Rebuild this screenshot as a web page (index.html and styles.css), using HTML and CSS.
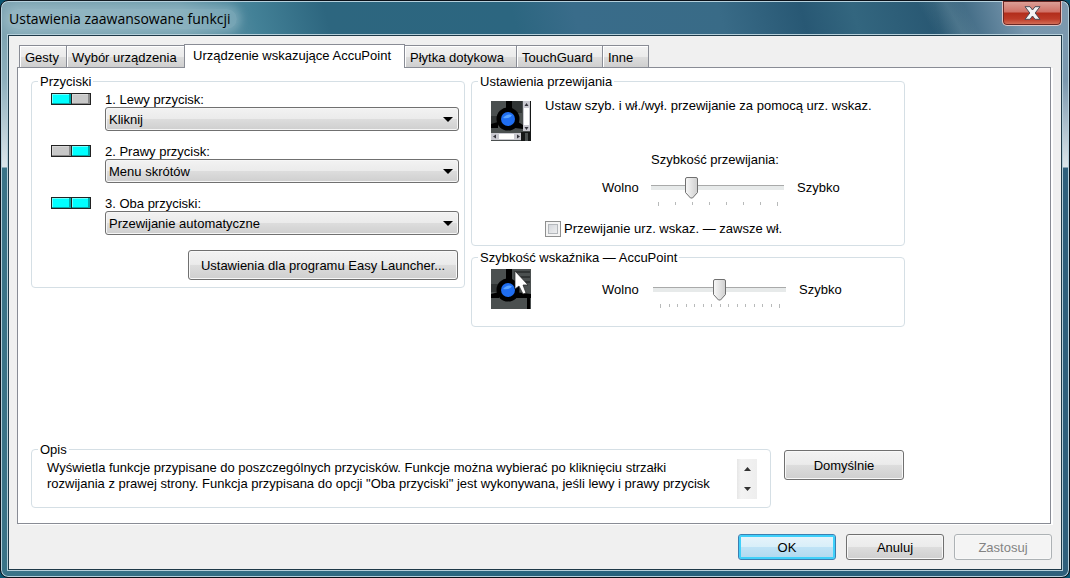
FILE: index.html
```html
<!DOCTYPE html>
<html lang="pl">
<head>
<meta charset="utf-8">
<title>Ustawienia zaawansowane funkcji</title>
<link rel="stylesheet" href="styles.css">
</head>
<body>
<main class="window">
  <header class="titlebar">
    <h1 class="title">Ustawienia zaawansowane funkcji</h1>
    <button class="close" type="button" aria-label="Zamknij">
      <svg width="17" height="14" viewBox="0 0 17 14"><path d="M1 .7h5L8.500 4 11 .7h5L11.200 7l4.800 6.300h-5L8.500 10 6 13.300H1L5.800 7z" fill="#f4f4f4" stroke="#4b4a55" stroke-width="1"/></svg>
    </button>
  </header>

  <form class="client">
    <div class="tabs" role="tablist">
      <button class="tab" type="button" role="tab">Gesty</button>
      <button class="tab" type="button" role="tab">Wybór urządzenia</button>
      <button class="tab tab-active" type="button" role="tab" aria-selected="true">Urządzenie wskazujące AccuPoint</button>
      <button class="tab" type="button" role="tab">Płytka dotykowa</button>
      <button class="tab" type="button" role="tab">TouchGuard</button>
      <button class="tab" type="button" role="tab">Inne</button>
    </div>

    <section class="panel" role="tabpanel">
      <div class="columns">
        <fieldset class="group">
          <legend>Przyciski</legend>
          <div class="assignments">
            <div class="assignment">
              <span class="pair"><i class="key key-on"></i><i class="key"></i></span>
              <div class="field">
                <label for="left">1. Lewy przycisk:</label>
                <select id="left"><option>Kliknij</option></select>
              </div>
            </div>
            <div class="assignment">
              <span class="pair"><i class="key"></i><i class="key key-on"></i></span>
              <div class="field">
                <label for="right">2. Prawy przycisk:</label>
                <select id="right"><option>Menu skrótów</option></select>
              </div>
            </div>
            <div class="assignment">
              <span class="pair"><i class="key key-on"></i><i class="key key-on"></i></span>
              <div class="field">
                <label for="both">3. Oba przyciski:</label>
                <select id="both"><option>Przewijanie automatyczne</option></select>
              </div>
            </div>
            <button class="button launcher" type="button">Ustawienia dla programu Easy Launcher...</button>
          </div>
        </fieldset>

        <div class="stack">
          <fieldset class="group">
            <legend>Ustawienia przewijania</legend>
            <div class="setting">
              <svg class="picture" width="40" height="40" viewBox="0 0 40 40">
                <rect width="40" height="40" fill="#4b5050"/>
                <path d="M0 15h13v8H0zM21 0h10v12H21z" fill="#303434"/>
                <path d="M15 0h6v8h-6zM0 23l7-2v6H0zM24 19l8 5v4l-8-1z" fill="#000"/>
                <circle cx="17" cy="18" r="11.500" fill="#000"/>
                <circle cx="17" cy="18" r="7" fill="#1f6df0"/>
                <path d="M12 17q4-5 9-3-2 4-9 3z" fill="#5ba4ff"/>
                <path d="M30 31h10v9H30zM39 0h1v40h-1z" fill="#151717"/>
                <path d="M34 32h3v8h-3z" fill="#4b5050"/>
                <path d="M32 0h7v30h-7zM0 32h30v7H0z" fill="#c9c9d0"/>
                <path d="M33 7h5v17h-5zM8 33h15v5H8z" fill="#fff"/>
                <path d="M33.500 5L35.500 2l2 3zM33.500 26l2 3 2-3zM5 33.500L2 35.500l3 2zM26 33.500l3 2-3 2z" fill="#34343c"/>
              </svg>
              <div class="details">
                <p class="hint">Ustaw szyb. i wł./wył. przewijanie za pomocą urz. wskaz.</p>
                <label class="slider-title" for="scroll">Szybkość przewijania:</label>
                <div class="slider-row">
                  <span>Wolno</span>
                  <div class="slider">
                    <input type="range" id="scroll" min="0" max="7" value="2">
                    <div class="ticks"><i></i><i></i><i></i><i></i><i></i><i></i><i></i><i></i></div>
                  </div>
                  <span>Szybko</span>
                </div>
                <label class="check"><input type="checkbox">Przewijanie urz. wskaz. — zawsze wł.</label>
              </div>
            </div>
          </fieldset>

          <fieldset class="group">
            <legend>Szybkość wskaźnika — AccuPoint</legend>
            <div class="setting setting-pointer">
              <svg class="picture" width="40" height="40" viewBox="0 0 40 40">
                <rect width="40" height="40" fill="#4b5050"/>
                <path d="M0 15h13v8H0zM24 2h15v2H24zM27 7h12v2H27zM31 12h8v2h-8z" fill="#303434"/>
                <path d="M15 0h6v12h-6zM0 25l8-2v6H0zM24 23l16 2v4H24zM36 27h3v13h-3z" fill="#000"/>
                <circle cx="17" cy="21" r="11.500" fill="#000"/>
                <circle cx="17" cy="21" r="7" fill="#1f6df0"/>
                <path d="M12 20q4-5 9-3-2 4-9 3z" fill="#5ba4ff"/>
                <path d="M24 2v18l4-3 4 8 3-1-3-8h5z" fill="#fff" stroke="#222" stroke-width=".7"/>
              </svg>
              <div class="details">
                <div class="slider-row">
                  <span>Wolno</span>
                  <div class="slider">
                    <input type="range" aria-label="Szybkość wskaźnika" min="0" max="14" value="7">
                    <div class="ticks"><i></i><i></i><i></i><i></i><i></i><i></i><i></i><i></i><i></i><i></i><i></i><i></i><i></i><i></i><i></i></div>
                  </div>
                  <span>Szybko</span>
                </div>
              </div>
            </div>
          </fieldset>
        </div>
      </div>

      <div class="bottom">
        <fieldset class="group description">
          <legend>Opis</legend>
          <div class="description-body">
            <p>Wyświetla funkcje przypisane do poszczególnych przycisków. Funkcje można wybierać po kliknięciu strzałki<br>rozwijania z prawej strony. Funkcja przypisana do opcji "Oba przyciski" jest wykonywana, jeśli lewy i prawy przycisk</p>
            <div class="spinner">
              <button type="button" aria-label="W górę"><svg width="7" height="4" viewBox="0 0 7 4"><path d="M0 4l3.500-4L7 4z" fill="#333"/></svg></button>
              <button type="button" aria-label="W dół"><svg width="7" height="4" viewBox="0 0 7 4"><path d="M0 0l3.500 4L7 0z" fill="#333"/></svg></button>
            </div>
          </div>
        </fieldset>
        <button class="button defaults" type="button">Domyślnie</button>
      </div>
    </section>

    <footer class="actions">
      <button class="button button-default" type="button">OK</button>
      <button class="button" type="button">Anuluj</button>
      <button class="button" type="button" disabled>Zastosuj</button>
    </footer>
  </form>
</main>
</body>
</html>
```

FILE: styles.css
```css
* {
  box-sizing: border-box;
}

body {
  margin: 0;
  background: #0a5470;
  color: #000;
  font: 13px/16px "Liberation Sans", Arial, sans-serif;
}

button,
select,
input {
  margin: 0;
  color: inherit;
  font: inherit;
}

p {
  margin: 0;
}

/* Window frame */
.window {
  display: flex;
  flex-direction: column;
  min-height: 100vh;
  padding: 0 7px 7px;
  border: 1px solid #0b1119;
  border-radius: 8px;
  background:
    linear-gradient(180deg, #7fa5b3 36px, #8fb0bd 80px, #dce5ea 166px, transparent 167px) left / 8px 100% no-repeat,
    linear-gradient(180deg, #7b98ae 36px, #7b98ae 80px, #dce5ea 166px, transparent 167px) right / 8px 100% no-repeat,
    linear-gradient(60deg, transparent 810px, rgba(120, 155, 170, 0.3) 835px, transparent 850px) top / 100% 36px no-repeat,
    linear-gradient(75deg, #7fa5b3 0, #6f9dad 180px, #438197 250px, #2d667f 320px, #2c6680 500px, #396c8a 560px, #396b87 700px, #285874 780px, #33667f 830px, #285772 910px, #7796ad 990px, #7b98ae 100%) top / 100% 36px no-repeat,
    linear-gradient(90deg, #3a7488, #25617c 60%, #2f607c);
  box-shadow: inset 0 0 0 1px #b5d0dc;
}

.titlebar {
  display: flex;
  align-items: flex-start;
  justify-content: space-between;
  height: 34px;
}

.title {
  margin: 8px 0 0;
  padding: 0 6px 0 1px;
  border-radius: 10px;
  background: rgba(190, 215, 223, 0.35);
  box-shadow: 0 0 8px 4px rgba(190, 215, 223, 0.35);
  font: 14px/20px "Open Sans", "Noto Sans", sans-serif;
}

.close {
  display: flex;
  align-items: center;
  justify-content: center;
  width: 60px;
  height: 25px;
  padding: 0 0 1px;
  border: 1px solid #e0c4c4;
  border-top: 0;
  border-radius: 0 0 5px 5px;
  background: linear-gradient(#dda39b, #d07065 46%, #b22d1b 50%, #bd3b28 75%, #d8765f);
  box-shadow: inset 0 0 0 1px #6b2825;
}

.client {
  display: flex;
  flex: 1;
  flex-direction: column;
  border: 1px solid #1e3948;
  background: #f0f0f0;
  box-shadow: 0 0 0 1px #b5cfda;
}

/* Tabs */
.tabs {
  display: grid;
  grid-template-columns: 48px 118px 220px 112px 86px 46px;
  align-items: end;
  margin-bottom: -1px;
  padding: 8px 0 0 10px;
}

.tab {
  height: 22px;
  margin-bottom: 1px;
  padding: 2px 0 0 5px;
  border: 1px solid #898c95;
  border-bottom: 0;
  border-left-width: 0;
  background: linear-gradient(#f2f2f2, #ebebeb 50%, #dddddd 52%, #cfcfcf);
  box-shadow: inset 1px 1px #fff;
  text-align: left;
  white-space: nowrap;
}

.tab:first-child {
  border-left-width: 1px;
}

.tab-active {
  position: relative;
  height: 24px;
  margin-bottom: 0;
  margin-left: -1px;
  padding: 0 0 2px 8px;
  border-left-width: 1px;
  background: #fff;
}

.panel {
  display: flex;
  flex: 1;
  flex-direction: column;
  margin: 0 10px 0 8px;
  padding: 4px 145px 15px 13px;
  border: 1px solid #898c95;
  background: #fff;
  box-shadow: 2px 1px #fff;
}

.columns {
  display: grid;
  grid-template-columns: minmax(0, 1fr) minmax(0, 1fr);
  gap: 6px;
  align-items: start;
}

/* Group boxes */
.group {
  min-width: 0;
  margin: 0;
  padding: 0;
  border: 1px solid #d5dfe5;
  border-radius: 4px;
}

.group legend {
  margin-left: 6px;
  padding: 2px 2px 0;
}

.assignments {
  display: flex;
  flex-direction: column;
  gap: 13px;
  padding: 2px 5px 7px 19px;
}

.assignment {
  display: flex;
  align-items: flex-start;
  gap: 14px;
}

.pair {
  display: flex;
  width: 40px;
  height: 12px;
  margin-top: 1px;
  padding: 1px;
  gap: 1px;
  background: #222;
}

.key {
  flex: 1;
  background: #c8c8c8;
  box-shadow: inset -2px -1px #8a8a8a, inset 1px 1px #d8d8d8;
}

.key-on {
  background: #00ffff;
  box-shadow: inset -2px -1px #00a8a8, inset 1px 1px #70ffff;
}

.field {
  display: flex;
  flex: 1;
  flex-direction: column;
}

.field label {
  margin-bottom: -1px;
}

select {
  width: 100%;
  height: 24px;
  padding: 2px 24px 0 3px;
  border: 1px solid #707070;
  border-radius: 3px;
  appearance: none;
  background:
    url("data:image/svg+xml,%3Csvg xmlns='http://www.w3.org/2000/svg' width='10' height='5'%3E%3Cpath d='M0 0h10L5 5z'/%3E%3C/svg%3E") right 5px center no-repeat,
    linear-gradient(#f2f2f2, #ebebeb 48%, #dddddd 50%, #cfcfcf);
  box-shadow: inset 0 0 0 1px #f6f6f6;
}

.button {
  padding: 2px 0 0;
  border: 1px solid #707070;
  border-radius: 3px;
  background: linear-gradient(#f2f2f2, #ebebeb 48%, #dddddd 50%, #cfcfcf);
  box-shadow: inset 0 0 0 1px #f8f8f8;
}

.launcher {
  align-self: flex-end;
  width: 270px;
  height: 30px;
  margin: 2px 1px 0 0;
}

/* Scrolling and pointer speed */
.stack {
  display: flex;
  flex-direction: column;
  gap: 2px;
}

.setting {
  display: flex;
  gap: 14px;
  padding: 8px 8px 8px 19px;
}

.picture {
  flex: none;
  margin-top: 3px;
}

.details {
  display: flex;
  flex: 1;
  flex-direction: column;
}

.hint {
  white-space: nowrap;
}

.slider-title {
  width: 132px;
  margin: 38px 0 9px 104px;
  text-align: center;
}

.slider-row {
  display: grid;
  grid-template-columns: 36px 133px auto;
  gap: 13px;
  justify-content: start;
  padding-left: 57px;
  line-height: 22px;
}

.slider {
  display: flex;
  flex-direction: column;
}

input[type="range"] {
  width: 100%;
  height: 22px;
  appearance: none;
  background: linear-gradient(#a9aaaa 1px, #e7eaea 1px) left 8px / 100% 5px no-repeat;
}

input[type="range"]::-webkit-slider-thumb {
  width: 13px;
  height: 22px;
  appearance: none;
  background: url("data:image/svg+xml,%3Csvg xmlns='http://www.w3.org/2000/svg' width='13' height='22'%3E%3ClinearGradient id='g'%3E%3Cstop stop-color='%23f8f8f8'/%3E%3Cstop offset='1' stop-color='%23cfcfcf'/%3E%3C/linearGradient%3E%3Cpath d='M2 .5h9q1.500 0 1.500 1.500v13.500l-5 5.500h-2l-5-5.500V2Q.5.5 2 .5z' fill='url(%23g)' stroke='%23707070'/%3E%3C/svg%3E") no-repeat;
}

.ticks {
  display: flex;
  justify-content: space-between;
  height: 7px;
  padding: 3px 6px 0 7px;
}

.ticks i {
  width: 1px;
  height: 3px;
  background: #b8baba;
}

.ticks i:first-child,
.ticks i:last-child {
  height: 4px;
}

.check {
  display: flex;
  align-items: center;
  gap: 3px;
  margin-top: 15px;
  white-space: nowrap;
}

.check input {
  width: 16px;
  height: 16px;
  border: 1px solid #8e8f8f;
  appearance: none;
  background: linear-gradient(135deg, #cbcfd5, #f6f6f6);
  box-shadow: inset 0 0 0 2px #f4f4f4, inset 0 0 0 3px #b4b8bc;
}

.setting-pointer {
  padding: 0 8px 17px 19px;
}

.setting-pointer .details {
  padding-top: 13px;
}

.setting-pointer .slider-row {
  grid-template-columns: 38px 133px auto;
}

/* Description */
.bottom {
  display: flex;
  align-items: flex-start;
  gap: 13px;
  margin: auto 1px 0 0;
}

.description {
  flex: 1;
}

.description-body {
  display: flex;
  justify-content: space-between;
  padding: 1px 13px 8px 15px;
}

.description p {
  padding-top: 1px;
  white-space: nowrap;
}

.spinner {
  display: flex;
  flex-direction: column;
  width: 20px;
  height: 40px;
}

.spinner button {
  display: flex;
  flex: 1;
  align-items: center;
  justify-content: center;
  padding: 0;
  border: 0;
  background: linear-gradient(90deg, #e6e6e6, #f3f3f3 20%, #eeeeee);
}

.defaults {
  width: 120px;
  height: 30px;
  margin-top: 10px;
}

/* Footer */
.actions {
  display: flex;
  justify-content: flex-end;
  gap: 10px;
  padding: 10px 9px 9px;
}

.actions .button {
  width: 98px;
  height: 26px;
}

.actions .button-default {
  border-color: #3c7fb1;
  background: linear-gradient(#e8f4fb, #d9eff9 48%, #bfe3f6 50%, #b0d8ee);
  box-shadow: inset 0 0 0 2px #3fd0fa;
}

.actions .button:disabled {
  border-color: #adb2b5;
  background: #f4f4f4;
  color: #838383;
}
```
